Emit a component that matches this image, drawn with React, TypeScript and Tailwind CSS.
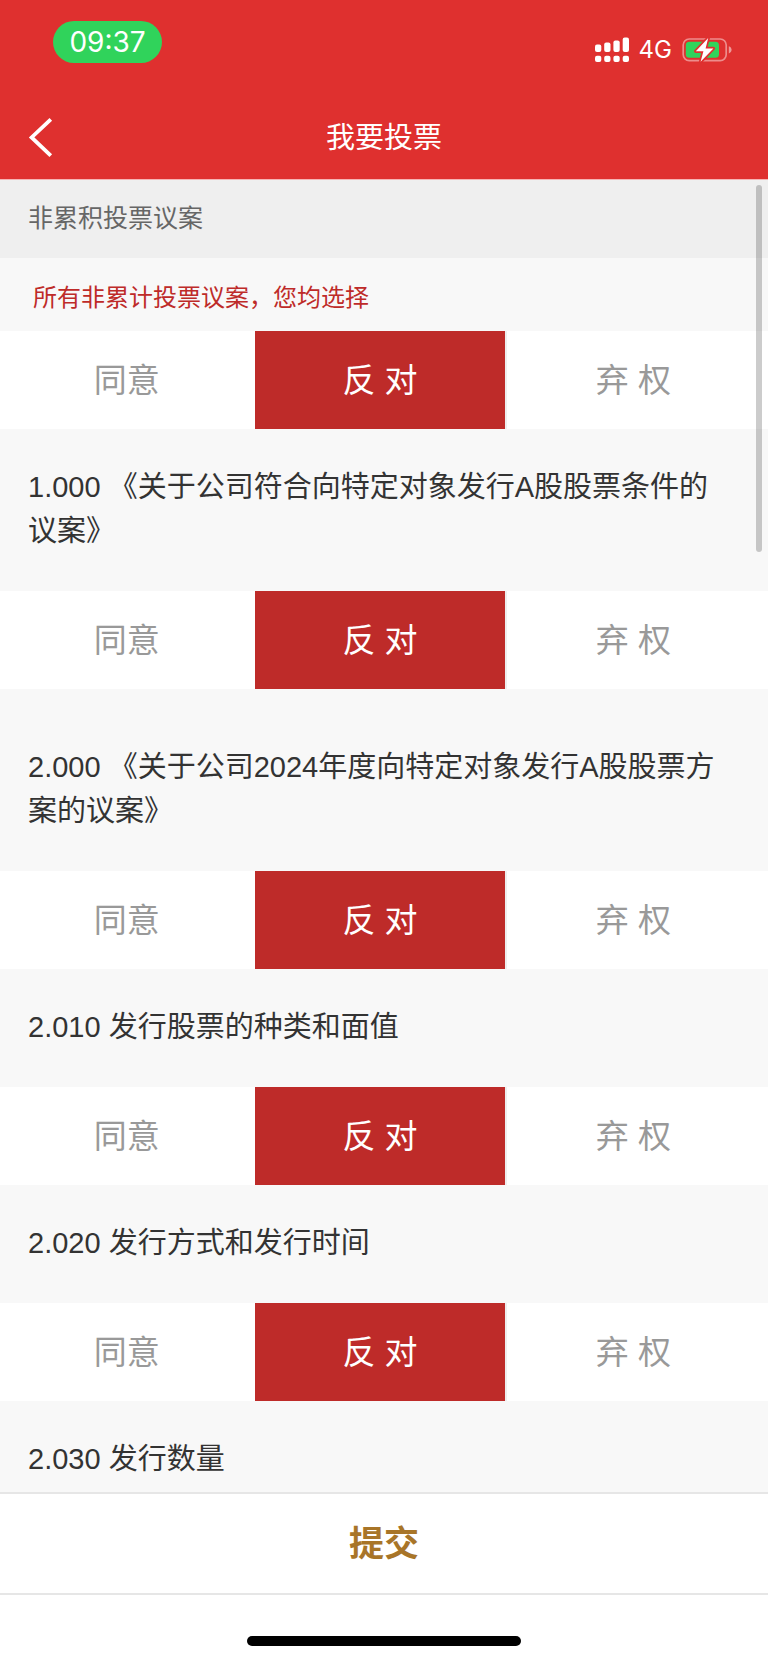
import { useState } from "react";

type Vote = "agree" | "against" | "abstain";

const options: { value: Vote; label: string }[] = [
    { value: "agree", label: "同意" },
    { value: "against", label: "反 对" },
    { value: "abstain", label: "弃 权" },
];

const proposals = [
    { id: "1.000", title: "《关于公司符合向特定对象发行A股股票条件的议案》" },
    { id: "2.000", title: "《关于公司2024年度向特定对象发行A股股票方案的议案》", group: true },
    { id: "2.010", title: "发行股票的种类和面值" },
    { id: "2.020", title: "发行方式和发行时间" },
];

function SignalIcon() {
    return (
        <svg width="34" height="26" viewBox="0 0 34 26" fill="white" aria-hidden="true">
            <rect x="0" y="7.5" width="6.3" height="7.5" rx="2" />
            <rect x="9.2" y="5.6" width="6.3" height="9.4" rx="2" />
            <rect x="18.4" y="3.4" width="6.3" height="11.6" rx="2" />
            <rect x="27.7" y="0.6" width="6.3" height="14.4" rx="2" />
            <rect x="0" y="18.7" width="6.3" height="6.3" rx="2" />
            <rect x="9.2" y="18.7" width="6.3" height="6.3" rx="2" />
            <rect x="18.4" y="18.7" width="6.3" height="6.3" rx="2" />
            <rect x="27.7" y="18.7" width="6.3" height="6.3" rx="2" />
        </svg>
    );
}

function BatteryIcon() {
    return (
        <svg width="50" height="26" viewBox="0 0 50 26" aria-hidden="true">
            <rect x="1.2" y="2" width="43" height="21.6" rx="6" fill="none" stroke="white" strokeOpacity="0.45" strokeWidth="1.7" />
            <path d="M46.8 9.2c1.6.5 2.8 1.9 2.8 3.6s-1.2 3.1-2.8 3.6z" fill="white" fillOpacity="0.5" />
            <rect x="3.8" y="4.8" width="33.2" height="16" rx="3.6" fill="#30d35b" />
            <path
                d="M26.2 1 13.8 14.2h7.6L18.6 24.8 31.4 11.4h-7.8z"
                fill="white"
                stroke="#df302f"
                strokeWidth="3.4"
                strokeLinejoin="round"
                paintOrder="stroke"
            />
        </svg>
    );
}

function StatusBar() {
    return (
        <div className="flex items-start justify-between pt-[21px] pl-[53px] pr-9 h-24 font-[Inter,sans-serif] text-white">
            <span className="flex items-center justify-center w-[109px] h-[42px] rounded-full bg-[#30d35b] text-[28px] leading-[42px]">
                09:37
            </span>
            <div className="flex items-center gap-[10px] pt-4">
                <SignalIcon />
                <span className="text-2xl leading-[26px]">4G</span>
                <BatteryIcon />
            </div>
        </div>
    );
}

type VoteRowProps = {
    name: string;
    legend: string;
    value: Vote | null;
    onChange: (vote: Vote) => void;
};

function VoteRow({ name, legend, value, onChange }: VoteRowProps) {
    return (
        <fieldset className="grid grid-cols-3 h-[98px] pr-2 bg-white" aria-label={legend}>
            {options.map((option) => (
                <label
                    key={option.value}
                    className="relative flex items-center justify-center pt-[2px] border-x-2 border-l-white border-r-white has-checked:border-r-[#eeeeee] text-[33px] leading-[44px] text-[#999999] has-checked:bg-[#be2b29] has-checked:text-white bg-clip-padding cursor-pointer"
                >
                    <input
                        type="radio"
                        name={name}
                        value={option.value}
                        checked={value === option.value}
                        onChange={() => onChange(option.value)}
                        className="sr-only"
                    />
                    {option.label}
                </label>
            ))}
        </fieldset>
    );
}

function ProposalTitle({ text }: { text: string }) {
    return <h3 className="pt-9 pb-[38px] pl-7 pr-9 text-[29px] leading-[44px]">{text}</h3>;
}

export default function App() {
    const [votes, setVotes] = useState<Record<string, Vote>>(() =>
        Object.fromEntries(proposals.map((p) => [p.id, "against" as Vote])),
    );

    const first = votes[proposals[0].id];
    const common = proposals.every((p) => votes[p.id] === first) ? first : null;

    const setAll = (vote: Vote) => setVotes(Object.fromEntries(proposals.map((p) => [p.id, vote])));

    return (
        <div
            lang="zh-CN"
            className="flex flex-col h-screen bg-[#f8f8f8] font-['Liberation_Sans','Noto_Sans_CJK_SC',sans-serif] text-[#333333]"
        >
            <header className="shrink-0 bg-[#df302f] border-b border-[#f6b4b4] text-white">
                <StatusBar />
                <div className="grid grid-cols-[1fr_auto_1fr] items-center h-[83px] px-7">
                    <button type="button" aria-label="返回" className="justify-self-start">
                        <svg width="25" height="40" viewBox="0 0 25 40" fill="none" stroke="white" strokeWidth="3.8" aria-hidden="true">
                            <path d="M22.8 1.4 3.6 19.4l19.2 18.2" />
                        </svg>
                    </button>
                    <h1 className="text-[29px] leading-[44px]">我要投票</h1>
                </div>
            </header>

            <div className="relative flex-1 min-h-0">
                <main className="h-full overflow-y-auto [scrollbar-width:none]">
                    <h2 className="flex items-center h-[78px] pb-[2px] px-7 bg-[#efefef] text-[25px] leading-[44px] text-[#666666]">
                        非累积投票议案
                    </h2>
                    <p className="flex items-center h-[73px] pt-[6px] px-[33px] text-2xl text-[#be2b29]">
                        所有非累计投票议案，您均选择
                    </p>
                    <VoteRow name="all" legend="所有非累计投票议案" value={common} onChange={setAll} />

                    {proposals.map((p) => (
                        <section key={p.id} className={p.group ? "pt-5" : ""}>
                            <ProposalTitle text={`${p.id} ${p.title}`} />
                            <VoteRow
                                name={p.id}
                                legend={p.title}
                                value={votes[p.id]}
                                onChange={(vote) => setVotes({ ...votes, [p.id]: vote })}
                            />
                        </section>
                    ))}
                    <ProposalTitle text="2.030 发行数量" />
                </main>
                <div className="absolute top-[5px] right-[6px] w-[6px] h-[28%] rounded-full bg-black/20" />
            </div>

            <footer className="shrink-0 bg-white border-t-2 border-[#e6e6e6]">
                <button
                    type="button"
                    className="block w-full h-[101px] border-b-2 border-[#e6e6e6] text-[35px] leading-[44px] font-bold text-[#a87528]"
                >
                    提交
                </button>
                <div className="flex justify-center pt-[41px] pb-[17px]">
                    <div className="w-[274px] h-[10px] rounded-full bg-black" />
                </div>
            </footer>
        </div>
    );
}
